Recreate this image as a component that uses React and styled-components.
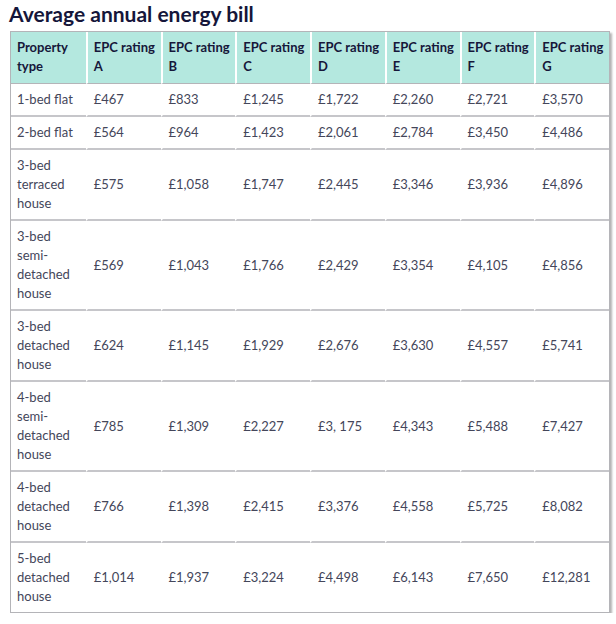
import React from 'react';
import styled, {createGlobalStyle} from 'styled-components';

const GlobalStyle = createGlobalStyle`
    body {
        margin: 0;
        background: #fff;
        font-family: Lato, "Open Sans", sans-serif;
    }
`

const Page = styled.main`
    padding: 0 6px 0 10px;
`

const Title = styled.h2`
    margin: 0 0 0 -1px;
    font-size: 21px;
    line-height: 28px;
    font-weight: 700;
    color: #15163a;
    padding-bottom: 3px;
`

const Table = styled.table`
    width: 600px;
    table-layout: fixed;
    border-collapse: separate;
    border-spacing: 0;
    border: 1px solid #b4b4b8;
    box-shadow: 2px 2px 2px rgba(0, 0, 0, 0.3);
`

const HeadCell = styled.th`
    background: #b4e8df;
    color: #16173a;
    font-size: 13px;
    font-weight: 700;
    line-height: 19px;
    text-align: left;
    vertical-align: top;
    white-space: nowrap;
    overflow: visible;
    padding: 6px 2px 7px 6px;
    border-left: ${props => props.first ? 'none' : '2px solid #fff'};
    border-bottom: 1px solid #b4b4b8;
`

const Cell = styled.td`
    color: #44465a;
    font-size: 13px;
    line-height: 19px;
    text-align: left;
    vertical-align: middle;
    padding: 6px 2px 6px 6px;
    border-left: ${props => props.first ? 'none' : '2px solid #fff'};
    border-bottom: ${props => props.last ? 'none' : '2px solid #c6c6ca'};
`

const ratings = ['A', 'B', 'C', 'D', 'E', 'F', 'G'];

const rows = [
    {type: ['1-bed flat'], bills: ['£467', '£833', '£1,245', '£1,722', '£2,260', '£2,721', '£3,570']},
    {type: ['2-bed flat'], bills: ['£564', '£964', '£1,423', '£2,061', '£2,784', '£3,450', '£4,486']},
    {type: ['3-bed', 'terraced', 'house'], bills: ['£575', '£1,058', '£1,747', '£2,445', '£3,346', '£3,936', '£4,896']},
    {type: ['3-bed', 'semi-', 'detached', 'house'], bills: ['£569', '£1,043', '£1,766', '£2,429', '£3,354', '£4,105', '£4,856']},
    {type: ['3-bed', 'detached', 'house'], bills: ['£624', '£1,145', '£1,929', '£2,676', '£3,630', '£4,557', '£5,741']},
    {type: ['4-bed', 'semi-', 'detached', 'house'], bills: ['£785', '£1,309', '£2,227', '£3, 175', '£4,343', '£5,488', '£7,427']},
    {type: ['4-bed', 'detached', 'house'], bills: ['£766', '£1,398', '£2,415', '£3,376', '£4,558', '£5,725', '£8,082']},
    {type: ['5-bed', 'detached', 'house'], bills: ['£1,014', '£1,937', '£3,224', '£4,498', '£6,143', '£7,650', '£12,281']},
];

const App = () => {
    return (
        <Page>
            <GlobalStyle />
            <Title>Average annual energy bill</Title>
            <Table>
                <thead>
                    <tr>
                        <HeadCell first>Property<br />type</HeadCell>
                        {ratings.map(r => (
                            <HeadCell key={r}>EPC rating<br />{r}</HeadCell>
                        ))}
                    </tr>
                </thead>
                <tbody>
                    {rows.map((row, i) => {
                        const last = i === rows.length - 1;
                        return (
                            <tr key={i}>
                                <Cell first last={last}>
                                    {row.type.map((line, j) => (
                                        <React.Fragment key={j}>
                                            {j > 0 && <br />}
                                            {line}
                                        </React.Fragment>
                                    ))}
                                </Cell>
                                {row.bills.map((bill, j) => (
                                    <Cell key={j} last={last}>{bill}</Cell>
                                ))}
                            </tr>
                        )
                    })}
                </tbody>
            </Table>
        </Page>
    )
}

export default App;
